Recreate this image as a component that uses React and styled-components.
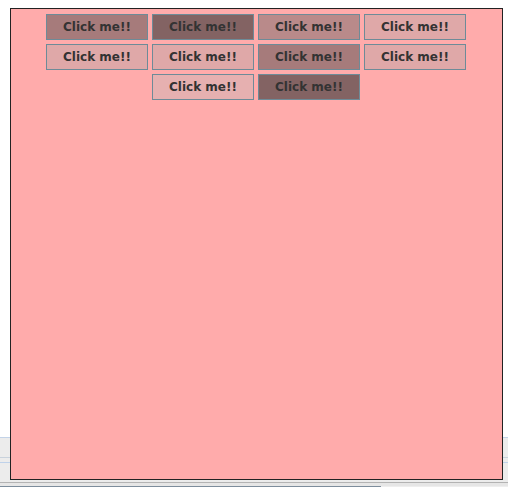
import React from 'react'
import styled, { createGlobalStyle } from 'styled-components'

const GlobalStyle = createGlobalStyle`
	html, body {
		margin: 0;
		padding: 0;
	}
	html {
		overflow: hidden;
	}
	body {
		padding: 8px 0 0 10px;
		height: 487px;
		box-sizing: border-box;
		font-family: 'DejaVu Sans', Verdana, sans-serif;
		background:
			linear-gradient(to right, #7d8d9c 0, #7d8d9c 381px, transparent 381px) 0 486px / 100% 1px no-repeat,
			linear-gradient(to bottom,
				#ffffff 0, #ffffff 437px,
				#c3d3e8 437px, #c3d3e8 438px,
				#ececec 438px, #ececec 457px,
				#c9d2dc 457px, #c9d2dc 458px,
				#ececec 458px, #ececec 462px,
				#bfd2ea 462px, #bfd2ea 463px,
				#ececec 463px, #ececec 482px,
				#b3b3b3 482px, #b3b3b3 483px,
				#e6e6e6 483px, #e6e6e6 486px,
				#eeeeee 486px, #eeeeee 487px);
		background-color: #ffffff;
	}
`

const Board = styled.div`
	box-sizing: border-box;
	width: 493px;
	height: 472px;
	border: 1px solid #222;
	background-color: #ffabab;
`

const Buttons = styled.div`
	display: flex;
	flex-wrap: wrap;
	justify-content: center;
	gap: 4px;
	padding: 5px 1px 0 0;
`

const Button = styled.button`
	box-sizing: border-box;
	width: 102px;
	height: 26px;
	margin: 0;
	padding: 0;
	border: 1px solid #6d8b98;
	background-color: ${props => props.shade};
	color: #333;
	font-family: 'DejaVu Sans', Verdana, sans-serif;
	font-weight: bold;
	font-size: 12px;
	cursor: pointer;
`

const shades = [
	'#a67b7b', '#836363', '#b98a8a', '#dfa8a8',
	'#dfa8a8', '#dfa8a8', '#a67b7b', '#dfa8a8',
	'#e6b0b0', '#836363',
]

const App = () => (
	<>
		<GlobalStyle />
		<Board>
			<Buttons>{
				shades.map((shade, i) => (
					<Button key={i} shade={shade}>Click me!!</Button>
				))
			}</Buttons>
		</Board>
	</>
)

export default App
